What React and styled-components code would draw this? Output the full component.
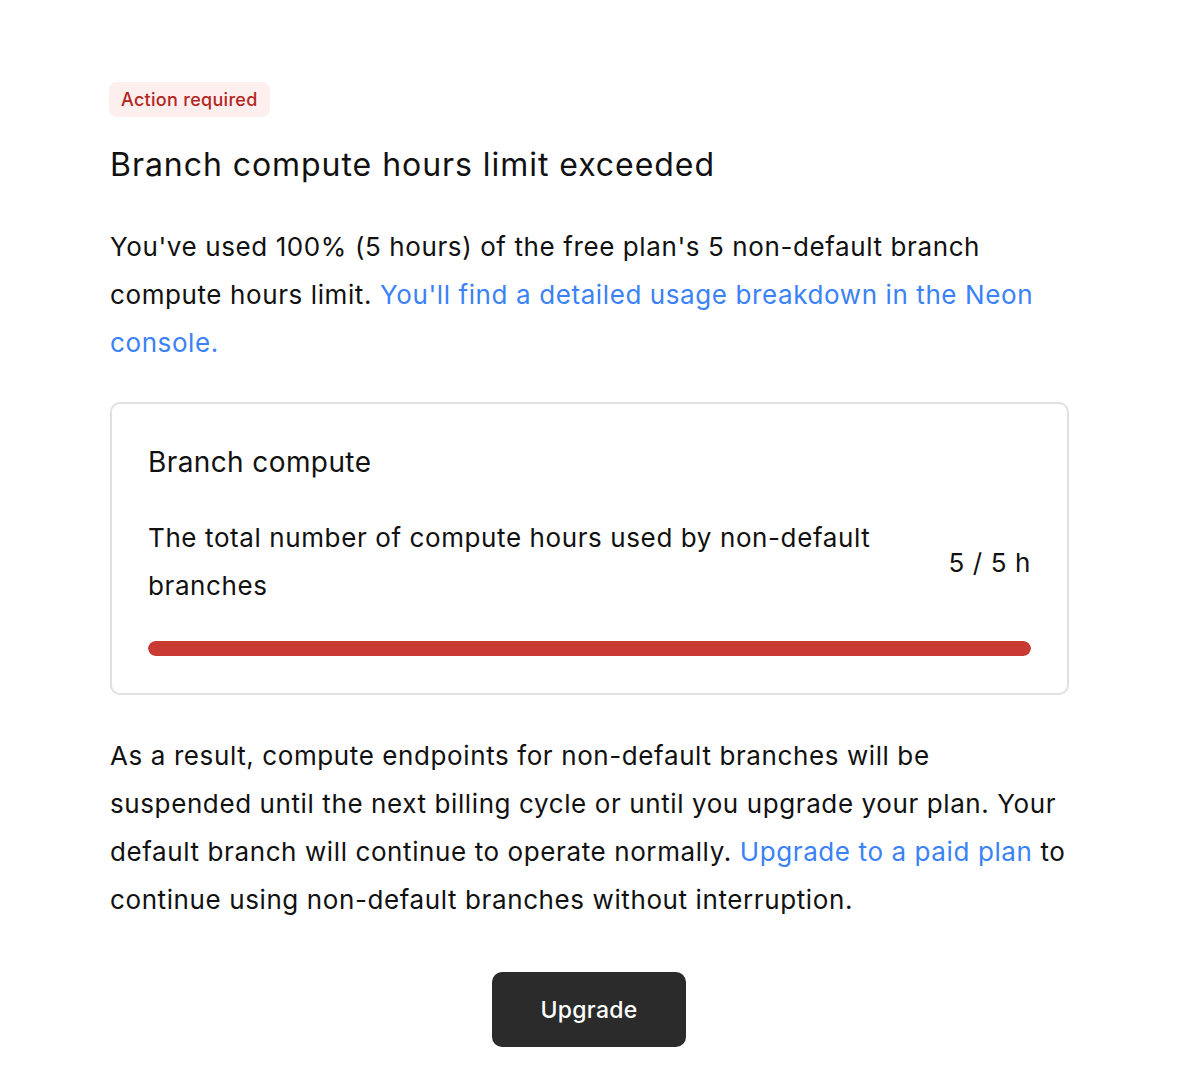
import styled, { createGlobalStyle } from "styled-components"

const GlobalStyle = createGlobalStyle`
  body {
    margin: 0;
    background: #ffffff;
    font-family: Inter, "Noto Sans", sans-serif;
    color: #111111;
  }
`

export default function App() {
  return (
    <Page>
      <GlobalStyle />
      <Content>
        <Badge>Action required</Badge>
        <Title>Branch compute hours limit exceeded</Title>
        <Text>
          You've used 100% (5 hours) of the free plan's 5 non-default branch
          compute hours limit.{" "}
          <Link href="#">You'll find a detailed usage breakdown in the Neon console.</Link>
        </Text>
        <Card>
          <CardTitle>Branch compute</CardTitle>
          <UsageRow>
            <UsageText>The total number of compute hours used by non-default branches</UsageText>
            <UsageValue>5 / 5 h</UsageValue>
          </UsageRow>
          <Track>
            <Fill style={{ width: `${(5 / 5) * 100}%` }} />
          </Track>
        </Card>
        <Text $gap={37}>
          As a result, compute endpoints for non-default branches will be
          suspended until the next billing cycle or until you upgrade your plan.
          Your default branch will continue to operate normally.{" "}
          <Link href="#">Upgrade to a paid plan</Link> to continue using
          non-default branches without interruption.
        </Text>
        <Actions>
          <Button>Upgrade</Button>
        </Actions>
      </Content>
    </Page>
  )
}

const Page = styled.div`
  padding: 82px 110px 40px 109px;
`

const Content = styled.div`
  max-width: 960px;
  display: flex;
  flex-direction: column;
  align-items: flex-start;
`

const Badge = styled.span`
  display: inline-block;
  background: #fcefee;
  color: #b3261e;
  font-size: 18px;
  font-weight: 500;
  letter-spacing: 0.3px;
  line-height: 35px;
  padding: 0 12px;
  border-radius: 8px;
`

const Title = styled.h1`
  margin: 28px 0 0 1px;
  font-size: 32px;
  font-weight: 400;
  line-height: 40px;
  letter-spacing: 0.95px;
`

const Text = styled.p`
  margin: ${(p) => p.$gap ?? 38}px 0 0 1px;
  font-size: 26px;
  line-height: 48px;
  letter-spacing: 0.6px;
`

const Link = styled.a`
  color: #3b82f6;
  text-decoration: none;
`

const Card = styled.div`
  box-sizing: border-box;
  width: calc(100% - 1px);
  margin: 35px 0 0 1px;
  border: 2px solid #e0e0e0;
  border-radius: 10px;
  padding: 36px 36px 37px;
`

const CardTitle = styled.h2`
  margin: 0;
  font-size: 28px;
  font-weight: 400;
  line-height: 44px;
  letter-spacing: 0.4px;
`

const UsageRow = styled.div`
  display: flex;
  align-items: center;
  justify-content: space-between;
  gap: 40px;
  margin-top: 30px;
`

const UsageText = styled.p`
  margin: 0;
  max-width: 740px;
  font-size: 26px;
  line-height: 48px;
  letter-spacing: 0.6px;
`

const UsageValue = styled.span`
  font-size: 26px;
  letter-spacing: 0.6px;
  white-space: nowrap;
`

const Track = styled.div`
  margin-top: 31px;
  height: 15px;
  border-radius: 8px;
  background: #eeeeee;
  overflow: hidden;
`

const Fill = styled.div`
  height: 100%;
  background: #c93a33;
  border-radius: 8px;
`

const Actions = styled.div`
  align-self: stretch;
  display: flex;
  justify-content: center;
  margin-top: 48px;
`

const Button = styled.button`
  width: 194px;
  height: 75px;
  border: none;
  border-radius: 10px;
  background: #2b2b2b;
  color: #ffffff;
  font-family: Inter, "Noto Sans", sans-serif;
  font-size: 23px;
  font-weight: 500;
  letter-spacing: 0.3px;
  cursor: pointer;
`
